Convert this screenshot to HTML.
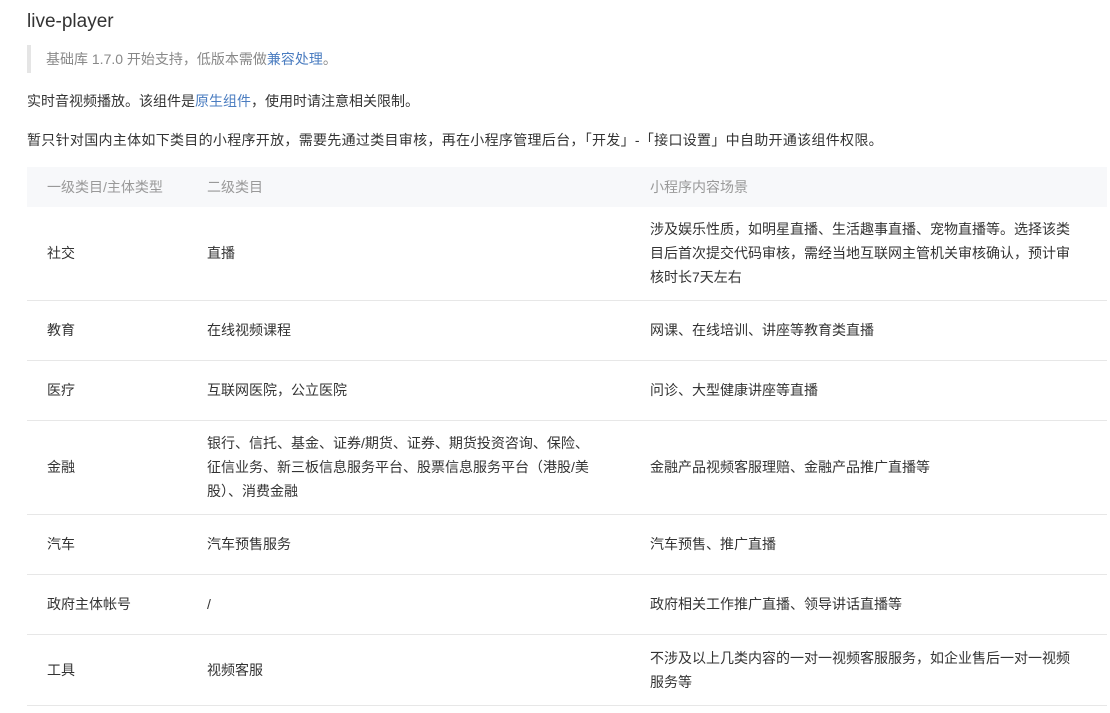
<!DOCTYPE html>
<html><head><meta charset="utf-8"><style>
body{margin:0;width:1110px;height:713px;overflow:hidden;background:#fff;font-family:"Liberation Sans","Noto Sans CJK SC",sans-serif;color:#333;font-size:14px;}
.t{position:absolute;left:27px;top:11px;font-size:19px;color:#333;}
.bq{position:absolute;left:27px;top:45px;height:28px;border-left:4px solid #e5e5e5;padding-left:15px;line-height:28px;color:#888;}
a{color:#4a7cc0;text-decoration:none}
.p{position:absolute;left:27px;}
table{position:absolute;left:27px;top:167px;width:1080px;border-collapse:collapse;font-size:14px;}
th{background:#f7f8fa;color:#999;font-weight:normal;text-align:left;height:40px;padding:0 0 0 20px;}
td{border-bottom:1px solid #e7e7e7;padding:0 20px;line-height:24px;vertical-align:middle;}
td:nth-child(3){padding-right:28px}
</style></head><body>
<div class="t">live-player</div>
<div class="bq">基础库 1.7.0 开始支持，低版本需做<a>兼容处理</a>。</div>
<div class="p" style="top:91px">实时音视频播放。该组件是<a>原生组件</a>，使用时请注意相关限制。</div>
<div class="p" style="top:130px;letter-spacing:0.3px">暂只针对国内主体如下类目的小程序开放，需要先通过类目审核，再在小程序管理后台，「开发」-「接口设置」中自助开通该组件权限。</div>
<table>
<colgroup><col style="width:160px"><col style="width:443px"><col></colgroup>
<tr><th>一级类目/主体类型</th><th>二级类目</th><th>小程序内容场景</th></tr>
<tr style="height:93px"><td>社交</td><td>直播</td><td>涉及娱乐性质，如明星直播、生活趣事直播、宠物直播等。选择该类目后首次提交代码审核，需经当地互联网主管机关审核确认，预计审核时长7天左右</td></tr>
<tr style="height:60px"><td>教育</td><td>在线视频课程</td><td>网课、在线培训、讲座等教育类直播</td></tr>
<tr style="height:60px"><td>医疗</td><td>互联网医院，公立医院</td><td>问诊、大型健康讲座等直播</td></tr>
<tr style="height:94px"><td>金融</td><td style="padding-right:40px">银行、信托、基金、证券/期货、证券、期货投资咨询、保险、征信业务、新三板信息服务平台、股票信息服务平台（港股/美股）、消费金融</td><td>金融产品视频客服理赔、金融产品推广直播等</td></tr>
<tr style="height:60px"><td>汽车</td><td>汽车预售服务</td><td>汽车预售、推广直播</td></tr>
<tr style="height:60px"><td>政府主体帐号</td><td>/</td><td>政府相关工作推广直播、领导讲话直播等</td></tr>
<tr style="height:71px"><td>工具</td><td>视频客服</td><td>不涉及以上几类内容的一对一视频客服服务，如企业售后一对一视频服务等</td></tr>
</table>
</body></html>
